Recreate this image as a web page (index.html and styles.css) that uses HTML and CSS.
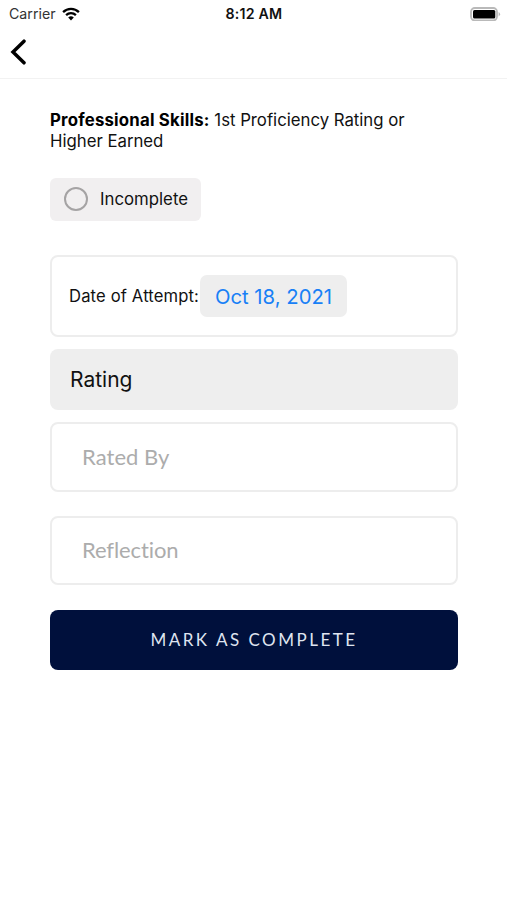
FILE: index.html
```html
<!DOCTYPE html>
<html lang="en">
<head>
<meta charset="utf-8">
<meta name="viewport" content="width=device-width, initial-scale=1">
<title>Professional Skills</title>
<link rel="stylesheet" href="styles.css">
</head>
<body>
<header class="header">
  <div class="status">
    <div class="carrier"><span class="carrier-name">Carrier</span>
      <svg class="wifi" viewBox="0 0 18 14"><path d="M1.1 5.1C5.5.8 12.5.8 16.9 5.1M4.1 8.2C6.9 5.5 11.1 5.5 13.9 8.2" fill="none" stroke="#000" stroke-width="2.3"/><path d="M6.2 10.4Q9 8.2 11.8 10.4L9 13.4Z"/></svg>
    </div>
    <div class="time"><span>8:12 AM</span></div>
    <svg class="battery" viewBox="0 0 31 14"><rect x="1" y="1" width="26" height="12.4" rx="3.8" fill="#fff" stroke="#b9b9b9" stroke-width="1.8"/><rect x="3" y="3" width="22.3" height="8.6" rx="1.5"/><path d="M28.6 5Q31.6 7.2 28.6 9.4Z" fill="#b9b9b9"/></svg>
  </div>
  <svg class="back" viewBox="0 0 17 26"><path d="M14 2.2 3 13 14 23.8" fill="none" stroke="#000" stroke-width="3.5" stroke-linecap="round"/></svg>
</header>
<main class="content">
  <p class="title"><span class="line"><b>Professional Skills:</b> 1st Proficiency Rating or</span><br><span class="line2">Higher Earned</span></p>
  <div class="state"><span class="circle"></span><span class="state-text">Incomplete</span></div>
  <div class="date-card"><span class="date-label">Date of Attempt:</span><div class="date"><span class="date-text">Oct 18, 2021</span></div></div>
  <div class="rating"><span class="rating-text">Rating</span></div>
  <div class="field rated"><span class="rated-text">Rated By</span></div>
  <div class="field reflection"><span class="reflection-text">Reflection</span></div>
  <div class="submit"><span class="submit-text">MARK AS COMPLETE</span></div>
</main>
</body>
</html>
```
FILE: styles.css
```css
* { box-sizing: border-box; }
body { margin: 0; min-height: 900px; background: #fff; color: #111; font-family: Inter, "Liberation Sans", sans-serif; }
span { white-space: nowrap; }
.header { height: 79px; border-bottom: 1px solid #f2f2f2; }
.status { height: 28px; display: grid; grid-template-columns: 1fr 1fr 1fr; align-items: center; padding: 0 6px 1px 9px; }
.carrier { display: flex; align-items: center; gap: 6px; font-size: 14.2px; line-height: 18px; color: #333; }
.wifi { width: 18px; height: 14px; }
.time { padding-right: 2px; text-align: center; font-size: 14.2px; font-weight: 600; letter-spacing: .2px; }
.battery { width: 31px; height: 14px; justify-self: end; }
.back { display: block; width: 17px; height: 26px; margin: 11px 0 0 10px; }
.content { padding: 31px 49px 0 50px; }
.title { margin: 0; font-size: 16.8px; line-height: 21px; letter-spacing: -.02px; }
.title b { letter-spacing: .2px; color: #000; }
.state { width: 151px; height: 43px; margin-top: 26px; padding: 0 0 1px 14px; display: flex; align-items: center; gap: 12px; border-radius: 6px; background: #f1eff0; font-size: 16.8px; }
.circle { width: 24px; height: 24px; border: 2px solid #a5a3a4; border-radius: 50%; }
.date-card { height: 82px; margin-top: 34px; padding-left: 17px; display: flex; align-items: center; border: 2px solid #ededed; border-radius: 8px; }
.date-label { width: 131px; padding-bottom: 1px; font-size: 16.6px; letter-spacing: .15px; }
.date { width: 147px; height: 42px; display: flex; align-items: center; justify-content: center; border-radius: 7px; background: #eee; color: #1880f6; font-size: 20.3px; }
.rating { height: 61px; margin-top: 12px; padding-left: 20px; display: flex; align-items: center; border-radius: 8px; background: #eee; font-size: 21px; }
.field { height: 70px; padding: 0 0 2px 30px; display: flex; align-items: center; border: 2px solid #ededed; border-radius: 8px; color: #acacac; font-family: Lato, sans-serif; font-size: 22px; font-variant-ligatures: none; letter-spacing: .05px; }
.rated { margin-top: 12px; }
.reflection { height: 69px; margin-top: 24px; letter-spacing: -.1px; }
.submit { height: 60px; margin-top: 25px; padding-bottom: 2px; display: flex; align-items: center; justify-content: center; border-radius: 8px; background: #00103c; color: #dfe4f0; font-family: Lato, sans-serif; font-size: 17px; letter-spacing: 2.5px; }
```
